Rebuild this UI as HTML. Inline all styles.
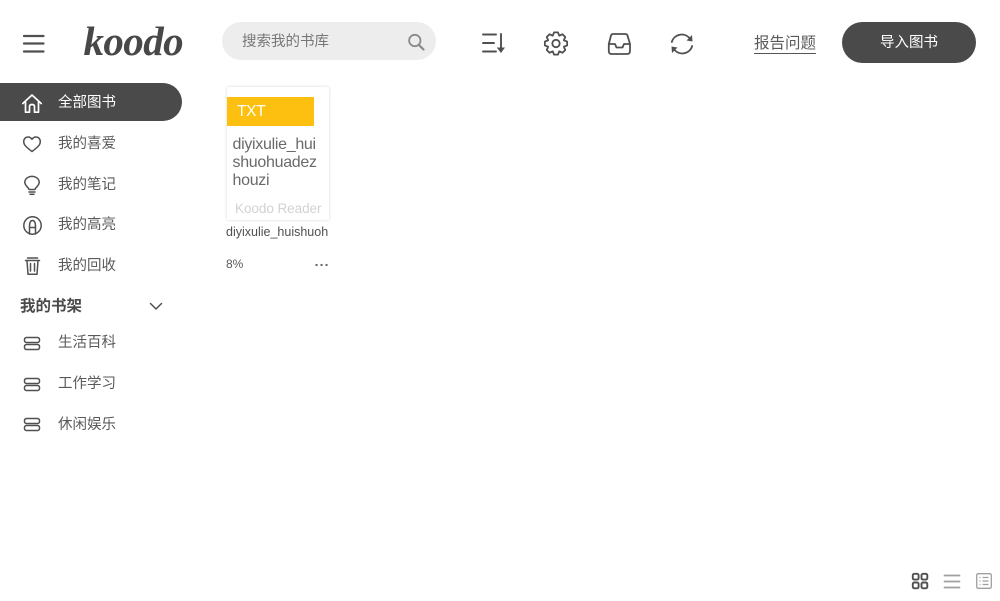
<!DOCTYPE html>
<html><head><meta charset="utf-8">
<style>
html,body{margin:0;padding:0;background:#fff;width:1000px;height:601px;overflow:hidden}
body{font-family:"Liberation Sans","Noto Sans CJK SC",sans-serif;color:#4a4a4a;position:relative}
.a{position:absolute;white-space:nowrap}
.n{position:absolute;left:58px;font-size:14.5px;line-height:20px;color:#5a5a5a;white-space:nowrap;margin-top:1px}
svg{position:absolute;overflow:visible;fill:none;stroke:#505050;stroke-width:1.5;stroke-linecap:round;stroke-linejoin:round}
</style></head><body>
<!-- hamburger -->
<svg style="left:24px;top:35px" width="20" height="18"><path d="M0 1H19.500M0 8.500H19.500M0 16.500H19.500" style="stroke-width:2.200"/></svg>
<!-- logo -->
<div class="a" style="left:83.500px;top:17px;font:italic bold 41px/48px 'Liberation Serif',serif;color:#484848;letter-spacing:-.6px">koodo</div>
<!-- search -->
<div class="a" style="left:222px;top:22px;width:214px;height:38px;border-radius:19px;background:#ededed"></div>
<div class="a" style="left:242px;top:32px;font-size:14.500px;line-height:20px;color:#777">搜索我的书库</div>
<svg style="left:408px;top:34px" width="18" height="18"><circle cx="6.800" cy="6.500" r="5.700" style="stroke:#8a8a8a;stroke-width:1.800"/><path d="M11 11L15.500 15.500" style="stroke:#8a8a8a;stroke-width:2.200"/></svg>
<!-- toolbar icons -->
<svg style="left:483px;top:33px" width="22" height="21"><path d="M0 1.500H13M0 10H11M0 18.500H13M18 1V17" style="stroke-width:1.900"/><path d="M13.800 14.500H22L18 20Z" style="fill:#505050;stroke:none"/></svg>
<svg style="left:544px;top:31px" width="24" height="25" viewBox="0 0 24 25"><g transform="translate(12 12.500)" style="stroke-width:1.800"><polygon points="-1.960,-11.130 1.960,-11.130 3.250,-7.850 6.480,-9.260 9.260,-6.480 7.850,-3.250 11.130,-1.960 11.130,1.960 7.850,3.250 9.260,6.480 6.480,9.260 3.250,7.850 1.960,11.130 -1.960,11.130 -3.250,7.850 -6.480,9.260 -9.260,6.480 -7.850,3.250 -11.130,1.960 -11.130,-1.960 -7.850,-3.250 -9.260,-6.480 -6.480,-9.260 -3.250,-7.850"/><circle r="3.700"/></g></svg>
<svg style="left:608px;top:33px" width="23" height="22"><path d="M5 1H17.500Q19 1 19.500 2.500L22 11V18Q22 21 19 21H3.500Q.8 21 .8 18V11L3 2.500Q3.500 1 5 1ZM.8 11H7L8.500 14.500H14.500L16 11H22" style="stroke-width:1.800"/></svg>
<svg style="left:670px;top:32px" width="24" height="24"><path d="M1.800 10A10.300 10.300 0 0 1 19.800 6.500M22.200 14A10.300 10.300 0 0 1 4.200 17.500" style="stroke-width:1.800"/><path d="M22.500 9.500L16.500 8.500L22 3ZM1.500 14.500L7.500 15.500L2 21Z" style="fill:#505050;stroke:none"/></svg>
<div class="a" style="left:754px;top:34px;font-size:15.500px;line-height:20px;color:#5a5a5a;border-bottom:1px solid #555;height:19px">报告问题</div>
<div class="a" style="left:842px;top:22px;width:134px;height:41px;border-radius:21px;background:#4a4a4a;color:#fff;font-size:14.500px;line-height:42px;text-align:center">导入图书</div>
<!-- sidebar -->
<div class="a" style="left:0;top:83px;width:182px;height:38px;background:#4a4a4a;border-radius:0 19px 19px 0"></div>
<svg style="left:22px;top:94px" width="20" height="19"><path d="M.8 9.500L10 1L19.200 9.500M3.500 8V18.200H7.500V12.500Q7.500 10.500 10 10.500Q12.500 10.500 12.500 12.500V18.200H16.500V8" style="stroke:#fff;stroke-width:1.700"/></svg>
<div class="n" style="top:92px;color:#fff">全部图书</div>
<svg style="left:23px;top:136px" width="18" height="16"><path d="M9 15.500C7 14 5 12.500 3 10.500C1.500 9 .7 7.500 .7 5.500C.7 3 2.500 1 5 1C6.500 1 8 1.800 9 3.300C10 1.800 11.500 1 13 1C15.500 1 17.300 3 17.300 5.500C17.300 7.500 16.500 9 15 10.500C13 12.500 11 14 9 15.500Z"/></svg>
<div class="n" style="top:133px">我的喜爱</div>
<svg style="left:24px;top:176px" width="16" height="19"><path d="M5 13.500C4.500 11 .8 10 .8 6.300A7 5.800 0 0 1 15.200 6.300C15.200 10 11.500 11 11 13.500ZM5 16H11M6 18.300H10"/></svg>
<div class="n" style="top:174px">我的笔记</div>
<svg style="left:23px;top:216px" width="19" height="19"><circle cx="9.500" cy="9.500" r="8.700"/><path d="M6.500 18V10.500Q6.500 4.500 9.500 4.500Q12.500 4.500 12.500 10.500V18M6.500 11.500H12.500"/></svg>
<div class="n" style="top:214px">我的高亮</div>
<svg style="left:25px;top:257px" width="15" height="18"><path d="M.5 3.500H14.500M2.500 1H12.500M2 3.500L3 17.300H12L13 3.500M5.500 6.500V14M9.500 6.500V14"/></svg>
<div class="n" style="top:255px">我的回收</div>
<div class="a" style="left:20px;top:296px;font-size:15.500px;line-height:21px;font-weight:bold;color:#4a4a4a">我的书架</div>
<svg style="left:150px;top:303px" width="12" height="7"><path d="M.5 .5L6 6L11.500 .5"/></svg>
<svg style="left:24px;top:337px" width="16" height="13"><rect x=".5" y=".5" width="15" height="5" rx="2"/><rect x=".5" y="7.500" width="15" height="5" rx="2"/></svg>
<div class="n" style="top:332px">生活百科</div>
<svg style="left:24px;top:378px" width="16" height="13"><rect x=".5" y=".5" width="15" height="5" rx="2"/><rect x=".5" y="7.500" width="15" height="5" rx="2"/></svg>
<div class="n" style="top:373px">工作学习</div>
<svg style="left:24px;top:418px" width="16" height="13"><rect x=".5" y=".5" width="15" height="5" rx="2"/><rect x=".5" y="7.500" width="15" height="5" rx="2"/></svg>
<div class="n" style="top:414px">休闲娱乐</div>
<!-- book -->
<div class="a" style="left:227px;top:87px;width:102px;height:133px;border-radius:2px;background:#fff;box-shadow:0 0 3px rgba(0,0,0,.16)"></div>
<div class="a" style="left:227px;top:97px;width:87px;height:29px;background:#fdc010;color:#fff;font-size:15.500px;line-height:30px;text-indent:10px;letter-spacing:-.3px">TXT</div>
<div class="a" style="left:232.500px;top:136px;font-size:16px;line-height:18px;color:#6a6a6a;white-space:pre;letter-spacing:-.3px">diyixulie_hui
shuohuadez
houzi</div>
<div class="a" style="left:235px;top:200px;font-size:13.500px;line-height:18px;color:#d2d2d2;letter-spacing:-.05px">Koodo Reader</div>
<div class="a" style="left:226px;top:224px;font-size:12.500px;line-height:16px;color:#505050;width:104px;overflow:hidden">diyixulie_huishuoh</div>
<div class="a" style="left:226px;top:256px;font-size:12px;line-height:16px;color:#5a5a5a">8%</div>
<svg style="left:315px;top:263px" width="14" height="4"><path d="M1.500 2H1.600M6.500 2H6.600M11.500 2H11.600" style="stroke-width:2.300;stroke:#666"/></svg>
<!-- view modes -->
<svg style="left:912px;top:573px" width="16" height="16"><rect x=".8" y=".8" width="5.800" height="5.800" rx="1.500" style="stroke-width:1.900"/><rect x="9.500" y=".8" width="5.800" height="5.800" rx="1.500" style="stroke-width:1.900"/><rect x=".8" y="9.500" width="5.800" height="5.800" rx="1.500" style="stroke-width:1.900"/><rect x="9.500" y="9.500" width="5.800" height="5.800" rx="1.500" style="stroke-width:1.900"/></svg>
<svg style="left:944px;top:574px" width="16" height="15"><path d="M.5 1.500H15.500M.5 7.500H15.500M.5 13.500H15.500" style="stroke:#a0a0a0;stroke-width:1.800"/></svg>
<svg style="left:976px;top:573px" width="16" height="16"><rect x=".7" y=".7" width="14.600" height="14.600" rx="1.500" style="stroke:#a0a0a0;stroke-width:1.300"/><path d="M3.500 4.500H4.500M6.500 4.500H12.500M3.500 8H4.500M6.500 8H12.500M3.500 11.500H4.500M6.500 11.500H12.500" style="stroke:#a0a0a0;stroke-width:1.200;stroke-linecap:butt"/></svg>
</body></html>
